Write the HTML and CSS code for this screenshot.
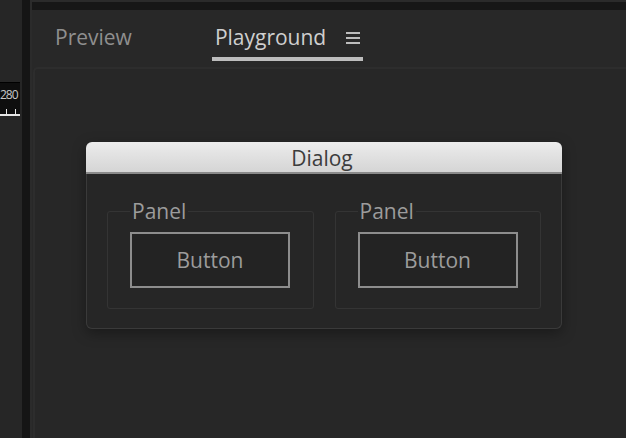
FILE: index.html
```html
<!DOCTYPE html>
<html>
<head>
<meta charset="utf-8">
<link rel="stylesheet" href="styles.css">
</head>
<body>
<div class="app">
  <div class="strip">
    <div class="ruler">
      <span class="ruler-num">280</span>
      <div class="ticks"><i></i><i></i></div>
    </div>
  </div>
  <div class="divider"></div>
  <div class="main">
    <div class="topline"></div>
    <div class="topdark"></div>
    <div class="tabs">
      <div class="tab">Preview</div>
      <div class="tab active">Playground
        <svg class="menu" width="16" height="14" viewBox="0 0 16 14"><rect x="1" y="1" width="14" height="2" fill="#bdbdbd"/><rect x="1" y="6" width="14" height="2" fill="#bdbdbd"/><rect x="1" y="11" width="14" height="2" fill="#bdbdbd"/></svg>
      </div>
    </div>
    <div class="content">
      <div class="dialog">
        <div class="dialog-title">Dialog</div>
        <div class="dialog-body">
          <fieldset class="panel"><legend>Panel</legend><button class="btn">Button</button></fieldset>
          <fieldset class="panel"><legend>Panel</legend><button class="btn">Button</button></fieldset>
        </div>
      </div>
    </div>
  </div>
</div>
</body>
</html>
```
FILE: styles.css
```css
html, body {
  margin: 0;
  padding: 0;
  background: #262626;
  width: 626px;
  height: 438px;
  overflow: hidden;
  font-family: "Open Sans", "Noto Sans", sans-serif;
}
.app {
  display: flex;
  height: 438px;
}
.strip {
  width: 22px;
  background: #262626;
}
.ruler {
  margin-top: 82px;
  width: 20px;
  height: 34px;
  background: #0e0e0e;
  border-top: 1px solid #000;
  box-sizing: border-box;
  overflow: hidden;
  position: relative;
}
.ruler-num {
  display: block;
  color: #c8c8c8;
  font-size: 12px;
  line-height: 14px;
  margin-top: 5px;
  white-space: nowrap;
  letter-spacing: -1px;
}
.ticks {
  position: absolute;
  left: 0;
  right: 0;
  bottom: 0;
  height: 8px;
  border-bottom: 2px solid #e6e6e6;
  box-sizing: border-box;
}
.ticks i {
  position: absolute;
  bottom: 0;
  width: 1px;
  height: 5px;
  background: #e6e6e6;
}
.ticks i:first-child { left: 6px; }
.ticks i:last-child { left: 15px; }
.divider {
  width: 8px;
  background: #151515;
}
.main {
  flex: 1;
  display: flex;
  flex-direction: column;
  background: #282828;
  border-left: 2px solid #2b2b2b;
}
.topline {
  height: 2px;
  background: #2b2b2b;
}
.topdark {
  height: 8px;
  background: #171717;
}
.tabs {
  height: 57px;
  display: flex;
  align-items: flex-start;
  padding-left: 22px;
  box-sizing: border-box;
}
.tab {
  color: #8f8f8f;
  font-size: 21px;
  line-height: 26px;
  padding-top: 14px;
  padding-left: 1px;
  margin-right: 80px;
}
.tab.active {
  color: #cfcfcf;
  border-bottom: 4px solid #bdbdbd;
  padding-left: 3px;
  padding-right: 2px;
  padding-bottom: 7px;
  display: flex;
  align-items: center;
}
.menu {
  margin-left: 19px;
  margin-top: 2px;
}
.content {
  flex: 1;
  margin-left: 1px;
  border-top: 2px solid #2d2d2d;
  border-left: 2px solid #2d2d2d;
  border-top-left-radius: 5px;
  background: #272727;
  padding-top: 73px;
  padding-left: 51px;
}
.dialog {
  width: 476px;
  border-radius: 6px;
  box-shadow: 0 4px 14px rgba(0,0,0,0.35);
}
.dialog-title {
  height: 30px;
  background: linear-gradient(#ececec, #d5d5d5);
  border-radius: 6px 6px 0 0;
  border-bottom: 2px solid #8a8a8a;
  color: #3c3c3c;
  font-size: 21px;
  line-height: 32px;
  text-align: center;
  padding-right: 4px;
}
.dialog-body {
  background: #262626;
  border: 1px solid #3a3a3a;
  border-top: none;
  border-radius: 0 0 6px 6px;
  height: 155px;
  box-sizing: border-box;
  display: flex;
  gap: 21px;
  padding: 25px 20px 0 20px;
}
.panel {
  margin: 0;
  width: 207px;
  height: 110px;
  box-sizing: border-box;
  border: 1px solid #343434;
  border-radius: 3px;
  padding: 9px 0 0 22px;
}
.panel legend {
  color: #9c9c9c;
  font-size: 21px;
  line-height: 24px;
  padding: 0 2px;
  margin-left: 0;
}
.btn {
  width: 160px;
  height: 56px;
  background: #232323;
  border: 2px solid #8d8d8d;
  border-radius: 0;
  color: #9c9c9c;
  font-family: "Open Sans", "Noto Sans", sans-serif;
  font-size: 21px;
  padding: 0;
  margin: 0;
}
```
